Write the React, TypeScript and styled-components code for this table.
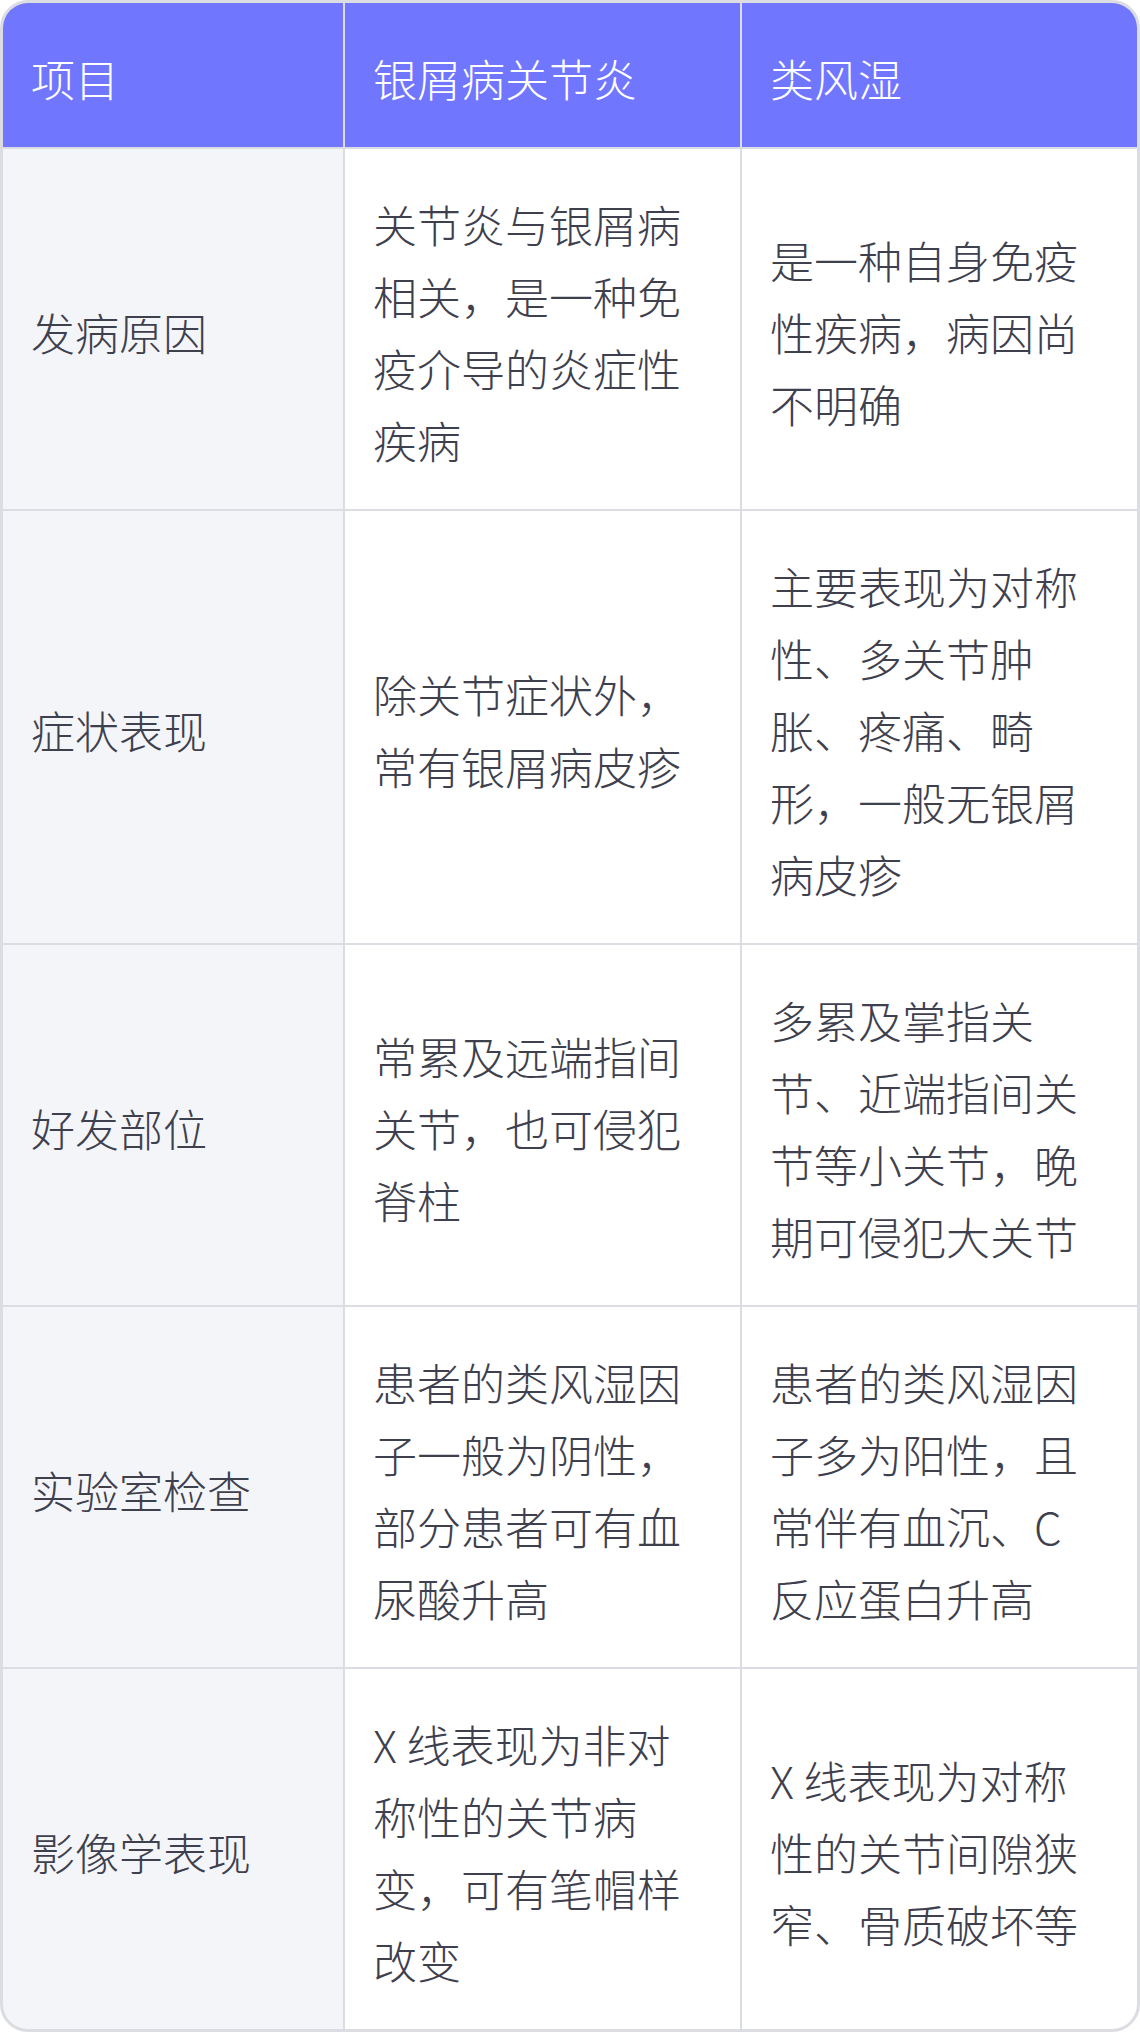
import React from "react";
import styled, { createGlobalStyle } from "styled-components";

const Global = createGlobalStyle`
  html, body { margin: 0; padding: 0; background: #ffffff; }
  body { font-family: "Noto Sans CJK SC", "Noto Sans", sans-serif; }
`;

const Table = styled.div`
  box-sizing: border-box;
  width: 1140px;
  display: grid;
  grid-template-columns: 340px 395px 395px;
  gap: 2px;
  background: #dcdde3;
  border: 3px solid #dcdde3;
  border-radius: 28px;
  overflow: hidden;
`;

const Cell = styled.div<{ $variant: "head" | "label" | "body" }>`
  box-sizing: border-box;
  display: flex;
  align-items: center;
  padding: 39px 28px 33px;
  font-family: "Noto Sans CJK SC", "Noto Sans", sans-serif;
  font-weight: 300;
  font-size: 44px;
  line-height: 72px;
  color: ${(p) => (p.$variant === "head" ? "#ffffff" : "#3e404e")};
  background: ${(p) =>
    p.$variant === "head" ? "#7176ff" : p.$variant === "label" ? "#f4f5f9" : "#ffffff"};
`;

const headers = ["项目", "银屑病关节炎", "类风湿"];

const rows: [string, string, string][] = [
  ["发病原因", "关节炎与银屑病相关，是一种免疫介导的炎症性疾病", "是一种自身免疫性疾病，病因尚不明确"],
  ["症状表现", "除关节症状外，常有银屑病皮疹", "主要表现为对称性、多关节肿胀、疼痛、畸形，一般无银屑病皮疹"],
  ["好发部位", "常累及远端指间关节，也可侵犯脊柱", "多累及掌指关节、近端指间关节等小关节，晚期可侵犯大关节"],
  ["实验室检查", "患者的类风湿因子一般为阴性，部分患者可有血尿酸升高", "患者的类风湿因子多为阳性，且常伴有血沉、C 反应蛋白升高"],
  ["影像学表现", "X 线表现为非对称性的关节病变，可有笔帽样改变", "X 线表现为对称性的关节间隙狭窄、骨质破坏等"],
];

export default function App() {
  return (
    <>
      <Global />
      <Table>
        {headers.map((h) => (
          <Cell key={h} $variant="head">{h}</Cell>
        ))}
        {rows.map((r) => (
          <React.Fragment key={r[0]}>
            <Cell $variant="label">{r[0]}</Cell>
            <Cell $variant="body">{r[1]}</Cell>
            <Cell $variant="body">{r[2]}</Cell>
          </React.Fragment>
        ))}
      </Table>
    </>
  );
}
